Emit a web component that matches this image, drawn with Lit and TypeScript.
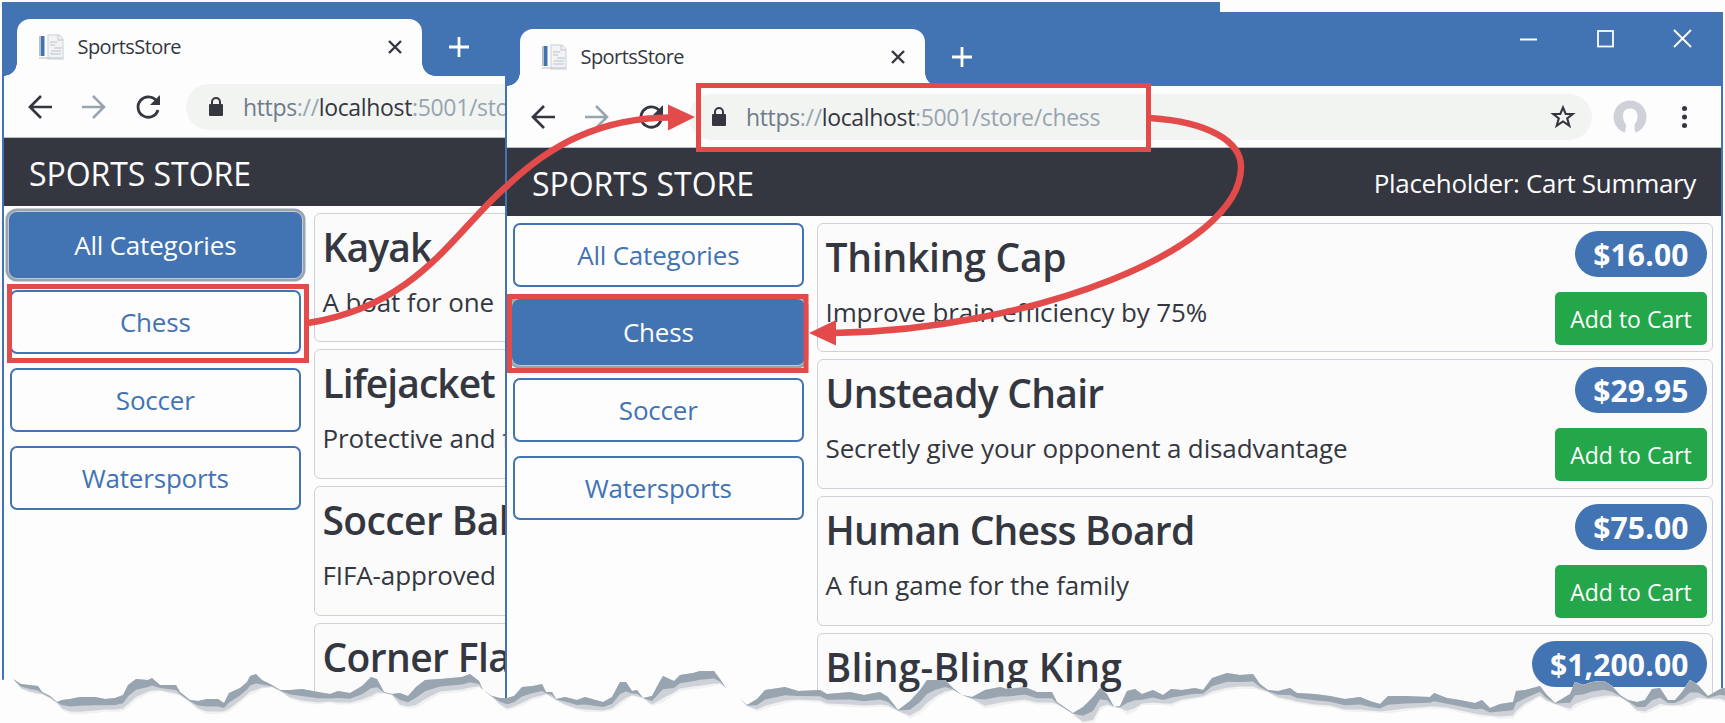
import { LitElement, html, svg, css, nothing } from "lit";
import { customElement, property } from "lit/decorators.js";
import { classMap } from "lit/directives/class-map.js";
import { styleMap } from "lit/directives/style-map.js";

interface Product {
  name: string;
  description?: string;
  price?: string;
  tracking: number;
}

const CATEGORIES = ["All Categories", "Chess", "Soccer", "Watersports"];

const ALL_PRODUCTS: Product[] = [
  { name: "Kayak", description: "A boat for one", tracking: -0.9 },
  { name: "Lifejacket", description: "Protective and f", tracking: -0.95 },
  { name: "Soccer Bal", description: "FIFA-approved", tracking: -0.6 },
  { name: "Corner Fla", tracking: -0.6 },
];

const CHESS_PRODUCTS: Product[] = [
  { name: "Thinking Cap", description: "Improve brain efficiency by 75%", price: "$16.00", tracking: -0.25 },
  { name: "Unsteady Chair", description: "Secretly give your opponent a disadvantage", price: "$29.95", tracking: -0.75 },
  { name: "Human Chess Board", description: "A fun game for the family", price: "$75.00", tracking: -0.78 },
  { name: "Bling-Bling King", price: "$1,200.00", tracking: 0.25 },
];

@customElement("browser-chrome")
class BrowserChrome extends LitElement {
  @property() path = "";
  @property({ type: Boolean }) controls = false;

  static styles = css`
    :host { display: block; }
    svg { display: block; flex: none; overflow: visible; }
    .titlebar { height: 74px; display: flex; align-items: flex-end; background: #4273b3; }
    .tab {
      position: relative; box-sizing: border-box; width: 405px; height: 57px; margin-left: 13px;
      display: flex; align-items: center; background: #fdfdfd; border-radius: 13px 13px 0 0;
      padding: 0 20px 2px 20px;
    }
    .flare { position: absolute; bottom: 0; width: 13px; height: 13px; }
    .flare.left { left: -13px; background: radial-gradient(circle at 0 0, transparent 12.5px, #fdfdfd 13px); }
    .flare.right { right: -13px; background: radial-gradient(circle at 100% 0, transparent 12.5px, #fdfdfd 13px); }
    .tabtitle { flex: 1; margin-left: 12.5px; font-size: 20px; letter-spacing: -0.55px; color: #343740; }
    .plus { margin: 0 0 19px 27px; }
    .controls { display: flex; gap: 60px; margin: 0 30px 39px auto; }
    .toolbar { height: 62px; box-sizing: border-box; display: flex; align-items: center; background: #fdfdfd; border-bottom: 1px solid #b9bfc8; }
    .nav { display: flex; gap: 30px; margin-left: 24px; }
    .omnibox {
      flex: 1; height: 46px; margin-left: 26px; border-radius: 23px; background: #f2f4f2;
      display: flex; align-items: center; padding: 0 17px 0 22.5px;
    }
    .url { flex: 1; margin-left: 20.5px; font-size: 23px; letter-spacing: -0.34px; white-space: nowrap; color: #98a4b0; }
    .scheme { color: #6f7b89; }
    .host { color: #343740; }
    .avatar { margin-left: 21px; }
    .menu { margin: 0 34px 0 35px; }
  `;

  render() {
    return html`
      <div class="titlebar">
        <div class="tab">
          <span class="flare left"></span><span class="flare right"></span>
          <svg width="28" height="28" viewBox="0 0 28 28">
            <rect x="2" y="3" width="3" height="20" fill="#b9bfc8" />
            <rect x="4" y="3" width="3.5" height="20" fill="#4273b3" />
            <path d="M11 2H22L26 6V26H11Z" fill="#f2f3f4" stroke="#d9dce0" stroke-width="1.4" />
            <path d="M21 2V7H26M13 9H20M13 12H18M17 15H25M14 18H24M13 21H24M2 25H26" fill="none" stroke="#ced2d8" stroke-width="1.3" />
          </svg>
          <span class="tabtitle">SportsStore</span>
          <svg width="14" height="14" viewBox="0 0 14 14"><path d="M1 1L13 13M13 1L1 13" stroke="#343740" stroke-width="2.4" /></svg>
        </div>
        <svg class="plus" width="20" height="20" viewBox="0 0 20 20"><path d="M10 0V20M0 10H20" stroke="#fdfdfd" stroke-width="2.8" /></svg>
        ${this.controls
          ? html`<div class="controls">
              <svg width="17" height="17" viewBox="0 0 17 17"><path d="M0 9.500H17" stroke="#fdfdfd" stroke-width="2" /></svg>
              <svg width="17" height="17" viewBox="0 0 17 17"><rect x="1" y="1" width="15" height="15.500" fill="none" stroke="#fdfdfd" stroke-width="1.800" /></svg>
              <svg width="17" height="17" viewBox="0 0 17 17"><path d="M0 0L17 17M17 0L0 17" stroke="#fdfdfd" stroke-width="1.900" /></svg>
            </div>`
          : nothing}
      </div>
      <div class="toolbar">
        <div class="nav">
          <svg width="24" height="24" viewBox="0 0 24 24"><path d="M24 12H2M13 1L2 12L13 23" fill="none" stroke="#343740" stroke-width="2.7" /></svg>
          <svg width="24" height="24" viewBox="0 0 24 24"><path d="M0 12H22M11 1L22 12L11 23" fill="none" stroke="#98a4b0" stroke-width="2.5" /></svg>
          <svg width="24" height="24" viewBox="0 0 24 24">
            <path d="M20.500 6A10.200 10.200 0 1 0 22 15" fill="none" stroke="#343740" stroke-width="2.800" />
            <path d="M24 0V10H14Z" fill="#343740" />
          </svg>
        </div>
        <div class="omnibox">
          <svg width="14" height="20" viewBox="0 0 14 20">
            <rect x="0" y="7" width="14" height="12" rx="1" fill="#343740" />
            <path d="M3 8V5A4 4 0 0 1 11 5V8" fill="none" stroke="#343740" stroke-width="2" />
          </svg>
          <span class="url"><span class="scheme">https</span>://<span class="host">localhost</span>:5001${this.path}</span>
          <svg width="24" height="24" viewBox="0 0 24 24">
            <path d="M12 2.500L14.700 9H21.700L16.200 13.400L18.300 20.700L12 16.500L5.700 20.700L7.800 13.400L2.300 9H9.300Z" fill="none" stroke="#343740" stroke-width="2.100" />
          </svg>
        </div>
        <svg class="avatar" width="34" height="34" viewBox="0 0 34 34">
          <circle cx="17" cy="17" r="16.500" fill="#ced2d8" />
          <path d="M17 8.500C12 8.500 10 12 10 16C10 20 11.500 23 13 24.500V27C12.500 29 12 31 12 34H22.500C22 31 21.500 29 21.500 27V24.500C23 23 24.500 20 24.500 16C24.500 12 22 8.500 17 8.500Z" fill="#fdfdfd" />
        </svg>
        <svg class="menu" width="5" height="24" viewBox="0 0 5 24">
          <circle cx="2.500" cy="3.500" r="2.500" fill="#343740" /><circle cx="2.500" cy="12" r="2.500" fill="#343740" /><circle cx="2.500" cy="20.500" r="2.500" fill="#343740" />
        </svg>
      </div>
    `;
  }
}

@customElement("store-page")
class StorePage extends LitElement {
  @property() selected = "";
  @property({ type: Boolean }) summary = false;
  @property({ attribute: false }) products: Product[] = [];

  static styles = css`
    :host { display: block; }
    .header {
      height: 68px; box-sizing: border-box; display: flex; align-items: center; justify-content: space-between;
      background: #343740; color: #fdfdfd; padding: 2px 25px 0 25px;
    }
    .brand { font-size: 32px; letter-spacing: -0.05px; }
    .summary { font-size: 26px; letter-spacing: -0.33px; }
    .body { display: flex; gap: 13px; padding: 6.5px 8px 0 6px; }
    .side { width: 290.5px; flex: none; display: flex; flex-direction: column; gap: 13.7px; }
    .category {
      height: 64px; box-sizing: border-box; border: 2px solid #4273b3; border-radius: 7px;
      display: flex; align-items: center; justify-content: center;
      font-size: 26px; letter-spacing: -0.2px; color: #4273b3; background: #fdfdfd;
    }
    .category.active { background: #4273b3; color: #fdfdfd; box-shadow: 0 0 0 1px #4273b3, 0 0 0 2px #c4c9d1, 0 0 0 4.5px #98a4b0; }
    .list { flex: 1; min-width: 0; display: flex; flex-direction: column; gap: 7px; }
    .card {
      height: 129.700px; box-sizing: border-box; border: 1.500px solid #ced2d8; border-radius: 6px;
      background: #fbfbfb; display: flex; justify-content: space-between; padding: 7px 5.500px 0 8px; white-space: nowrap;
    }
    .name { font-size: 39px; line-height: 47px; font-weight: 600; padding-top: 2px; color: #343740; }
    .desc { font-size: 26px; line-height: 39px; margin-top: 13px; letter-spacing: -0.120px; color: #343740; }
    .actions { display: flex; flex-direction: column; align-items: flex-end; gap: 15px; }
    .price {
      height: 46px; border-radius: 23px; padding: 0 18px; background: #4273b3; color: #fdfdfd;
      font-size: 30px; line-height: 48px; font-weight: 700; letter-spacing: 0.150px;
    }
    .add {
      width: 152px; height: 53px; border-radius: 5px; background: #24a64b; color: #fdfdfd;
      font-size: 23px; line-height: 54px; text-align: center; text-indent: 1px;
    }
  `;

  render() {
    return html`
      <div class="header">
        <span class="brand">SPORTS STORE</span>
        ${this.summary ? html`<span class="summary">Placeholder: Cart Summary</span>` : nothing}
      </div>
      <div class="body">
        <div class="side">
          ${CATEGORIES.map((c) => html`<div class=${classMap({ category: true, active: c === this.selected })}>${c}</div>`)}
        </div>
        <div class="list">
          ${this.products.map(
            (p) => html`<div class="card">
              <div>
                <div class="name" style=${styleMap({ letterSpacing: `${p.tracking}px` })}>${p.name}</div>
                ${p.description ? html`<div class="desc">${p.description}</div>` : nothing}
              </div>
              ${p.price
                ? html`<div class="actions">
                    <span class="price">${p.price}</span>
                    ${p.description ? html`<span class="add">Add to Cart</span>` : nothing}
                  </div>`
                : nothing}
            </div>`
          )}
        </div>
      </div>
    `;
  }
}

// Torn paper profile: x, top of the shadow, bottom of the shadow.
const TEAR: [number, number, number][] = [
  [0,680,680],[13,679,679],[21,684,688],[29,685,691],[38,686,693],[42,692,694],[50,696,698],[57,702,703],[62,700,708],[70,699,711],[80,697,711],[95,697,710],[105,699,709],[115,698,709],[123,695,708],[128,685,703],[136,679,696],[148,680,691],[152,678,690],[160,685,690],[176,685,693],[180,692,695],[190,700,702],[198,701,708],[207,699,711],[218,699,711],[224,703,711],[229,693,708],[240,688,700],[247,682,694],[250,676,691],[256,674,689],[262,680,687],[272,685,687],[280,690,691],[290,690,697],[302,689,700],[318,692,702],[330,694,701],[338,691,702],[350,693,702],[362,686,699],[371,677,695],[377,679,692],[384,692,693],[392,694,695],[400,693,704],[408,696,706],[416,687,704],[425,680,698],[440,679,691],[462,677,689],[470,674,687],[479,681,686],[483,690,690],[492,696,697],[500,698,704],
  [507,698,708],[514,696,706],[522,687,702],[533,686,697],[542,684,695],[546,692,694],[552,692,697],[556,699,700],[565,697,704],[577,700,708],[585,697,709],[603,702,710],[612,697,708],[620,682,701],[626,682,697],[632,691,695],[637,690,696],[643,698,698],[652,696,704],[660,681,699],[663,676,697],[674,681,692],[680,675,688],[693,673,686],[700,671,685],[714,671,683],[720,679,683],[726,688,688],[740,699,699],[747,705,706],[757,699,709],[765,690,705],[785,687,700],[798,691,699],[820,690,700],[827,694,703],[850,692,704],[864,695,705],[880,692,704],[888,697,705],[898,710,711],[910,701,715],[920,690,709],[927,680,702],[935,680,696],[945,680,691],[953,688,690],[962,695,695],[972,697,699],[985,690,705],[1000,687,702],
  [1007,689,701],[1025,687,699],[1037,692,702],[1052,692,702],[1057,702,704],[1073,713,714],[1083,707,721],[1093,697,719],[1100,688,706],[1107,694,704],[1114,707,707],[1120,706,708],[1127,691,710],[1135,689,707],[1142,694,703],[1153,690,702],[1163,695,703],[1171,689,703],[1182,690,699],[1195,688,697],[1203,690,696],[1212,678,691],[1227,673,687],[1240,675,686],[1253,674,686],[1260,684,689],[1268,690,692],[1278,691,697],[1290,688,699],[1297,693,701],[1315,694,704],[1330,696,705],[1345,699,709],[1360,697,709],[1370,701,710],[1380,704,711],[1388,696,710],[1405,696,708],[1430,697,706],[1434,693,706],[1447,698,707],[1460,700,710],[1475,703,713],[1482,700,714],[1490,708,715],[1500,704,716],[1513,702,715],[1516,691,710],
  [1525,690,703],[1540,686,695],[1546,694,700],[1555,703,704],[1570,694,708],[1575,682,703],[1583,685,700],[1592,682,697],[1604,681,695],[1612,686,695],[1620,695,697],[1628,700,702],[1637,702,710],[1645,700,711],[1652,689,707],[1660,688,703],[1668,700,705],[1675,700,705],[1682,692,704],[1690,680,700],[1698,685,697],[1708,696,699],[1720,689,698],[1725,688,700],
];

// Closed band between two depths of the profile, 0 being its top and 1 its bottom.
const band = (from: number, to: number) => {
  const edge = (t: number) => TEAR.map(([x, a, b]) => `${x},${(a + (b - a) * t).toFixed(1)}`);
  return [...edge(from), ...edge(to).reverse()].join(" ");
};
const paper = [...TEAR.map(([x, a]) => `${x},${a}`), "1725,723", "0,723"].join(" ");

@customElement("app-root")
class AppRoot extends LitElement {
  static styles = css`
    :host {
      display: block; position: relative; width: 1725px; height: 723px; overflow: hidden;
      background: #fdfdfd; font-family: "Open Sans", "Noto Sans", sans-serif;
    }
    .window {
      position: absolute; width: 1218px; height: 740px; box-sizing: border-box;
      border: solid #4273b3; border-width: 0 2px; background: #fdfdfd; overflow: hidden;
    }
    .back { left: 2px; top: 2px; }
    .front { left: 505px; top: 12px; }
    .overlay { position: absolute; left: 0; top: 0; }
  `;

  render() {
    return html`
      <div class="window back">
        <browser-chrome path="/sto"></browser-chrome>
        <store-page selected="All Categories" .products=${ALL_PRODUCTS}></store-page>
      </div>
      <div class="window front">
        <browser-chrome path="/store/chess" controls></browser-chrome>
        <store-page selected="Chess" summary .products=${CHESS_PRODUCTS}></store-page>
      </div>
      <svg class="overlay" width="1725" height="723" viewBox="0 0 1725 723">
        ${svg`
          <polygon points=${paper} fill="#fdfdfd" />
          <polygon points=${band(0, 1.25)} fill="#f0f1f1" />
          <polygon points=${band(0, 1.05)} fill="#ced2d8" />
          <polygon points=${band(0, 0.63)} fill="#98a4b0" />
        `}
        <g fill="none" stroke="#e34b4b">
          <rect x="9.500" y="286.500" width="297" height="74" stroke-width="5" />
          <rect x="509.500" y="296.500" width="296.500" height="74" stroke-width="5" />
          <rect x="698.500" y="85.500" width="450" height="64" stroke-width="5" />
          <path d="M308 323C420 305 455 230 507 186C550 145 600 118 670 117.500" stroke-width="6.500" />
          <path d="M1150 118C1210 122 1241 142 1241 167C1241 250 1030 330 834 333" stroke-width="6.500" />
        </g>
        <path d="M668 104.500L695 117L668 130.500Z" fill="#e34b4b" />
        <path d="M836 320L809 333L836 345.500Z" fill="#e34b4b" />
      </svg>
    `;
  }
}
